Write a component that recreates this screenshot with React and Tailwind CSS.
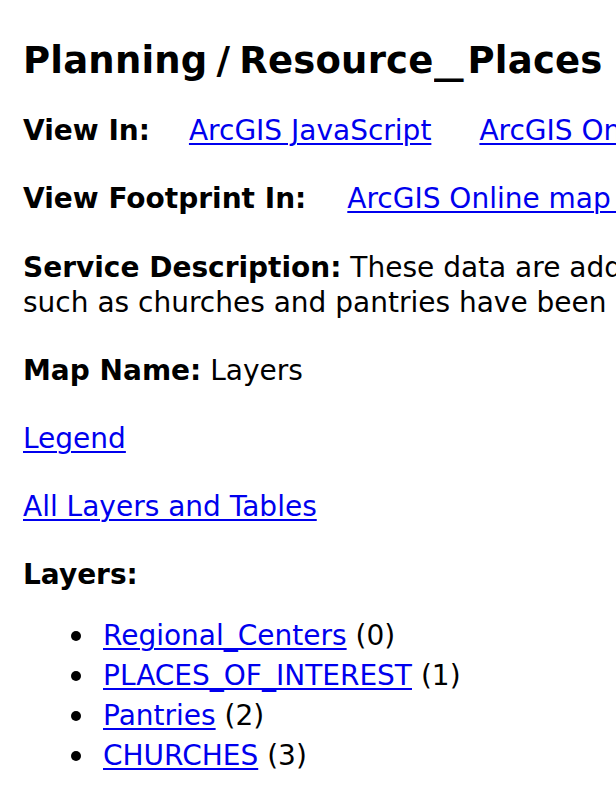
const LAYERS = [
  { name: 'Regional_Centers', id: 0 },
  { name: 'PLACES_OF_INTEREST', id: 1 },
  { name: 'Pantries', id: 2 },
  { name: 'CHURCHES', id: 3 },
]

const font = { fontFamily: '"DejaVu Sans", Verdana, sans-serif' }

function Link({ children }) {
  return <a href="#" className="text-[#0000ee] underline decoration-2 underline-offset-[3px]">{children}</a>
}

export default function App() {
  return (
    <div className="h-screen w-full overflow-hidden bg-white text-black" style={font}>
      <div className="w-[1600px] pl-[23px] text-[28px] leading-[34px]">
        <h2 className="mt-[39px] text-[37px] font-bold leading-[43px] tracking-[0.2px]">
          Planning<span className="px-[9px]">/</span>Resource<span className="inline-block w-[34px] origin-left scale-x-[1.6]">_</span>Places
        </h2>

        <div className="mt-[32px] whitespace-nowrap">
          <b>View In:</b>
          <span className="ml-[39px]"><Link>ArcGIS JavaScript</Link></span>
          <span className="ml-[48px]"><Link>ArcGIS Online map viewer</Link></span>
          <span className="ml-[48px]"><Link>Google Earth</Link></span>
          <span className="ml-[48px]"><Link>ArcMap</Link></span>
          <span className="ml-[48px]"><Link>ArcGIS Explorer</Link></span>
        </div>

        <div className="mt-[34px] whitespace-nowrap">
          <b>View Footprint In:</b>
          <span className="ml-[41px]"><Link>ArcGIS Online map viewer</Link></span>
        </div>

        <div className="mt-[34px] whitespace-nowrap leading-[35px]">
          <div><b>Service Description:</b> These data are addresses of community resources in the region. Locations</div>
          <div>such as churches and pantries have been geocoded from lists provided by local agencies.</div>
        </div>

        <div className="mt-[34px]">
          <b>Map Name:</b> Layers
        </div>

        <div className="mt-[34px]">
          <Link>Legend</Link>
        </div>

        <div className="mt-[34px]">
          <Link>All Layers and Tables</Link>
        </div>

        <div className="mt-[34px] font-bold">Layers:</div>

        <ul className="mt-[24px] leading-[40px]">
          {LAYERS.map(l => (
            <li key={l.id} className="flex items-center">
              <span className="ml-[48px] mr-[22px] h-[10px] w-[10px] rounded-full bg-black" />
              <span><Link>{l.name}</Link> ({l.id})</span>
            </li>
          ))}
        </ul>
      </div>
    </div>
  )
}
